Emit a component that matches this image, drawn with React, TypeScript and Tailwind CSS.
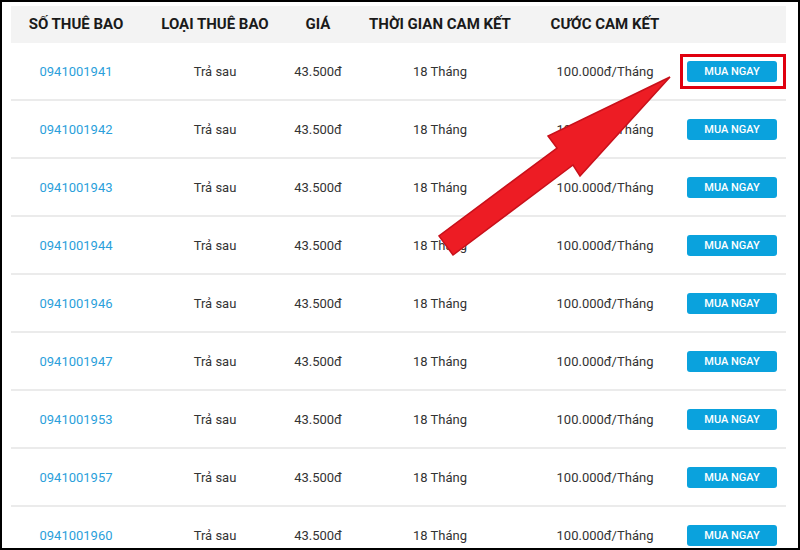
import React from 'react';

const numbers = [
  '0941001941',
  '0941001942',
  '0941001943',
  '0941001944',
  '0941001946',
  '0941001947',
  '0941001953',
  '0941001957',
  '0941001960',
];

const cols = 'grid grid-cols-[130px_148px_58px_186px_144px_109px]';

function Row({ num }: { num: string }) {
  return (
    <div className={`${cols} h-[58px] items-center text-center text-[13px] text-[#333] border-b-2 border-[#ebebeb]`}>
      <div className="text-[#2b9fdb] pt-[2px]">{num}</div>
      <div className="pt-[2px]">Trả sau</div>
      <div className="pt-[2px]">43.500đ</div>
      <div className="pt-[2px]">18 Tháng</div>
      <div className="pt-[2px]">100.000đ/Tháng</div>
      <div className="flex justify-center pl-[1px] pt-[1px]">
        <button
          type="button"
          className="w-[90px] h-[21px] rounded-[3px] bg-[#0aa2dd] text-white text-[11px] font-medium leading-none"
        >
          MUA NGAY
        </button>
      </div>
    </div>
  );
}

export default function App() {
  return (
    <div className="relative w-[800px] h-[550px] overflow-hidden bg-white" style={{ fontFamily: 'Roboto, "Noto Sans", sans-serif' }}>
      <div className="pt-[6px] pl-[11px] w-[786px]">
        <div className={`${cols} h-[37px] items-center text-center text-[15px] font-bold text-[#1a1a1a] bg-[#f3f3f3]`}>
          <div>SỐ THUÊ BAO</div>
          <div>LOẠI THUÊ BAO</div>
          <div>GIÁ</div>
          <div>THỜI GIAN CAM KẾT</div>
          <div>CƯỚC CAM KẾT</div>
          <div />
        </div>
        {numbers.map((n) => (
          <Row key={n} num={n} />
        ))}
      </div>

      {/* highlight box round the first button */}
      <div className="absolute left-[680px] top-[54px] w-[106px] h-[35px] border-[3px] border-[#e0000f]" />

      {/* pointer arrow */}
      <svg className="absolute left-0 top-0" width="800" height="550" viewBox="0 0 800 550">
        <polygon
          points="670,77 548,136 557,148 439,236 453,255 573,165 580,176"
          fill="#ed1c24"
          stroke="#c8101a"
          strokeWidth="1.5"
          strokeLinejoin="miter"
        />
      </svg>

      {/* outer frame */}
      <div className="absolute inset-0 border-2 border-black pointer-events-none" />
    </div>
  );
}
